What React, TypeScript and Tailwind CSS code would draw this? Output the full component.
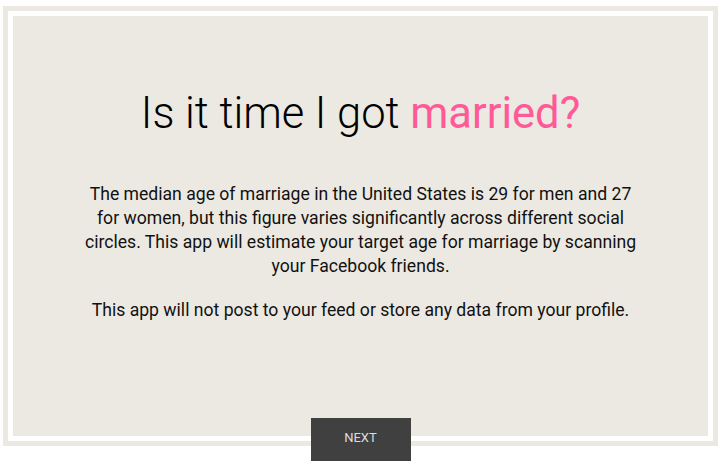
export default function App() {
  return (
    <div className="w-[725px] h-[461px] overflow-hidden bg-white font-['Roboto',sans-serif]">
      <div className="relative ml-[3px] mt-[6px] w-[715px] h-[440px] border-[5px] border-[#ece9e2] bg-white p-[5px]">
        <div className="flex h-full flex-col items-center bg-[#ece9e2] pt-[72px] text-center">
          <h1 className="text-[43.5px] font-light leading-[52px] text-black">
            Is it time I got <span className="font-normal text-[#ff5a97]">married?</span>
          </h1>
          <p className="mt-[42px] text-[17.6px] leading-[24px] text-[#111]">
            The median age of marriage in the United States is 29 for men and 27
            <br />
            for women, but this figure varies significantly across different social
            <br />
            circles. This app will estimate your target age for marriage by scanning
            <br />
            your Facebook friends.
          </p>
          <p className="mt-[20px] text-[17.6px] leading-[24px] text-[#111]">
            This app will not post to your feed or store any data from your profile.
          </p>
        </div>
        <button className="absolute left-1/2 top-[407px] h-[44px] w-[100px] -translate-x-1/2 bg-[#404040] pb-[4px] text-[13px] text-[#ddd]">
          NEXT
        </button>
      </div>
    </div>
  );
}
